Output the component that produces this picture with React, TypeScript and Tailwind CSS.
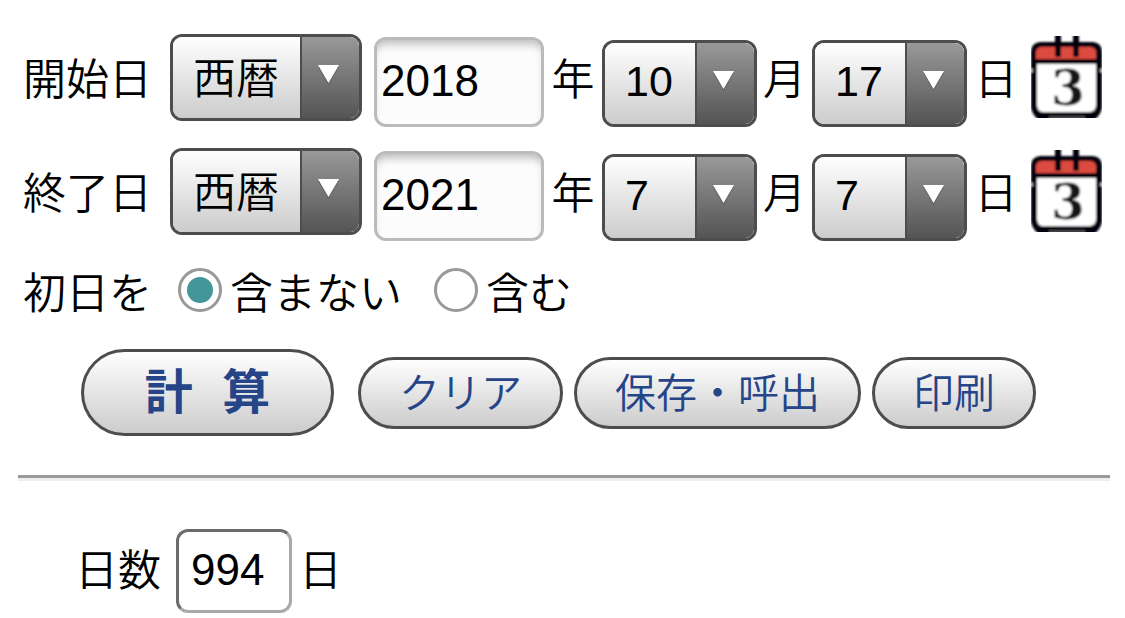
import { useState } from "react";

type DropdownProps = {
  label: string;
  value: string;
  options: string[];
  onChange: (value: string) => void;
  wide?: boolean;
};

function Dropdown({ label, value, options, onChange, wide = false }: DropdownProps) {
  return (
    <div
      className={`relative h-[87px] shrink-0 overflow-hidden rounded-xl border-3 border-[#4d4d4d] ${
        wide ? "w-48 self-start" : "w-[155px] self-end"
      }`}
    >
      <select
        aria-label={label}
        value={value}
        onChange={(event) => onChange(event.target.value)}
        className={`block h-full w-full appearance-none bg-linear-to-b from-white to-[#cccccc] pr-16 pl-5 outline-none ${
          wide ? "pt-1" : "pb-1"
        }`}
      >
        {options.map((option) => (
          <option key={option}>{option}</option>
        ))}
      </select>
      <span className="pointer-events-none absolute inset-y-0 right-0 w-[59px] border-l-2 border-[#4d4d4d] bg-linear-to-b from-[#999999] to-[#555555] pt-7 pl-4">
        <svg width="21" height="20" viewBox="0 0 21 20" aria-hidden="true">
          <path d="M0 2h21L10.500 20z" fill="#555555" opacity="0.6" />
          <path d="M0 0h21L10.500 18z" fill="#ffffff" />
        </svg>
      </span>
    </div>
  );
}

function CalendarIcon() {
  return (
    <svg width="71" height="82" viewBox="0 0 71 82" aria-hidden="true">
      <defs>
        <filter id="soften" x="0" y="0" width="1" height="1">
          <feGaussianBlur stdDeviation="0.8" />
        </filter>
      </defs>
      <g filter="url(#soften)">
        <path
          d="M9 6H62Q71 7 71 16V72Q69 80 63 84H8Q2 80 0 72V16Q0 7 9 6Z"
          fill="#060608"
        />
        <path d="M10 11H60Q65 12 65 16V23H5V16Q5 12 10 11Z" fill="#dc4c40" />
        <path d="M6 28H65V70Q64 76 58 76H12Q7 76 6 70Z" fill="#ffffff" />
        <path d="M24-2h6v23h-6zM42-2h6v23h-6z" fill="#060608" />
        <path d="M18 80H54V84H18Z" fill="#444444" />
        <path d="M0 33h2v3H0zM69 33h2v3H69z" fill="#aaaaaa" />
        <text
          x="37"
          y="69"
          textAnchor="middle"
          fill="#151515"
          className="font-['DejaVu_Serif',serif] text-[48px] font-bold"
        >
          3
        </text>
      </g>
    </svg>
  );
}

const range = (count: number) => Array.from({ length: count }, (_, i) => String(i + 1));
const eras = ["西暦", "令和", "平成", "昭和"];
const months = range(12);
const days = range(31);

type DateValue = { era: string; year: string; month: string; day: string };

function DateRow({
  title,
  value,
  onChange,
}: {
  title: string;
  value: DateValue;
  onChange: (value: DateValue) => void;
}) {
  return (
    <div role="group" aria-label={title} className="flex h-[93px] items-center">
      <span className="w-[147px] shrink-0">{title}</span>
      <Dropdown
        wide
        label={`${title} 暦`}
        value={value.era}
        options={eras}
        onChange={(era) => onChange({ ...value, era })}
      />
      <input
        aria-label={`${title} 年`}
        value={value.year}
        onChange={(event) => onChange({ ...value, year: event.target.value })}
        className="ml-3 h-[90px] w-[170px] shrink-0 self-end rounded-xl border-3 border-[#bbbbbb] bg-[#fcfcfc] pb-0.5 pl-1 text-[44px] shadow-[inset_0_8px_8px_-4px_#bbbbbb] outline-none"
      />
      <span className="w-[58px] shrink-0 text-center">年</span>
      <Dropdown
        label={`${title} 月`}
        value={value.month}
        options={months}
        onChange={(month) => onChange({ ...value, month })}
      />
      <span className="w-[55px] shrink-0 text-center">月</span>
      <Dropdown
        label={`${title} 日`}
        value={value.day}
        options={days}
        onChange={(day) => onChange({ ...value, day })}
      />
      <span className="w-[58px] shrink-0 text-center">日</span>
      <button type="button" aria-label={`${title} カレンダー`} className="mt-0.5 ml-1.5 shrink-0 self-start">
        <CalendarIcon />
      </button>
    </div>
  );
}

function Radio({ text, checked, onChange }: { text: string; checked: boolean; onChange: () => void }) {
  return (
    <label className="flex items-center gap-2">
      <input
        type="radio"
        name="first-day"
        checked={checked}
        onChange={onChange}
        className="size-11 appearance-none rounded-full border-3 border-[#999999] bg-white bg-clip-content p-1.5 checked:bg-[#439798]"
      />
      <span className="pt-2.5">{text}</span>
    </label>
  );
}

const pill = "rounded-full border-3 border-[#4d4d4d] bg-linear-to-b from-white to-[#cccccc] text-[#264488]";

export default function App() {
  const [start, setStart] = useState<DateValue>({ era: "西暦", year: "2018", month: "10", day: "17" });
  const [end, setEnd] = useState<DateValue>({ era: "西暦", year: "2021", month: "7", day: "7" });
  const [include, setInclude] = useState(false);
  const [result, setResult] = useState("994");

  const calculate = () => {
    const time = (d: DateValue) => Date.UTC(Number(d.year), Number(d.month) - 1, Number(d.day));
    const count = Math.round((time(end) - time(start)) / 86400000) + (include ? 1 : 0);
    setResult(String(count));
  };

  return (
    <main className="bg-white pt-[34px] pr-[15px] pl-[18px] font-['Liberation_Sans','Noto_Sans_CJK_JP',sans-serif] text-[43px] leading-none font-[350] text-black">
      <form onSubmit={(event) => event.preventDefault()}>
        <div className="flex flex-col gap-[21px] pl-[5px]">
          <DateRow title="開始日" value={start} onChange={setStart} />
          <DateRow title="終了日" value={end} onChange={setEnd} />
        </div>

        <div className="mt-[22px] flex items-center pl-[5px]">
          <span className="w-[155px] pt-2.5">初日を</span>
          <Radio text="含まない" checked={!include} onChange={() => setInclude(false)} />
          <div className="ml-8">
            <Radio text="含む" checked={include} onChange={() => setInclude(true)} />
          </div>
        </div>

        <div className="mt-[33px] flex items-center gap-[11px] pl-[63px] text-[41px]">
          <button type="button" onClick={calculate} className={`${pill} mr-[13px] h-[87px] w-[253px] text-5xl font-bold`}>
            <span className="mr-4">計</span> 算
          </button>
          <button type="button" onClick={() => setResult("")} className={`${pill} h-[72px] px-[38px] pt-1`}>
            クリア
          </button>
          <button type="button" className={`${pill} h-[72px] px-[38px] pt-1`}>
            保存・呼出
          </button>
          <button type="button" className={`${pill} h-[72px] px-[38px] pt-1`}>
            印刷
          </button>
        </div>

        <hr className="mt-[39px] border-t-3 border-b-3 border-t-[#9a9a9a] border-b-[#eeeeee]" />

        <div className="mt-12 flex items-center pl-[57px]">
          <label htmlFor="days" className="w-[101px]">
            日数
          </label>
          <input
            id="days"
            readOnly
            value={result}
            className="h-[84px] w-[116px] rounded-xl border-3 border-t-[#6c6c6c] border-r-[#a9a9a9] border-b-[#a9a9a9] border-l-[#6c6c6c] pb-0.5 pl-3 text-[44px] outline-none"
          />
          <span className="ml-[7px]">日</span>
        </div>
      </form>
    </main>
  );
}
